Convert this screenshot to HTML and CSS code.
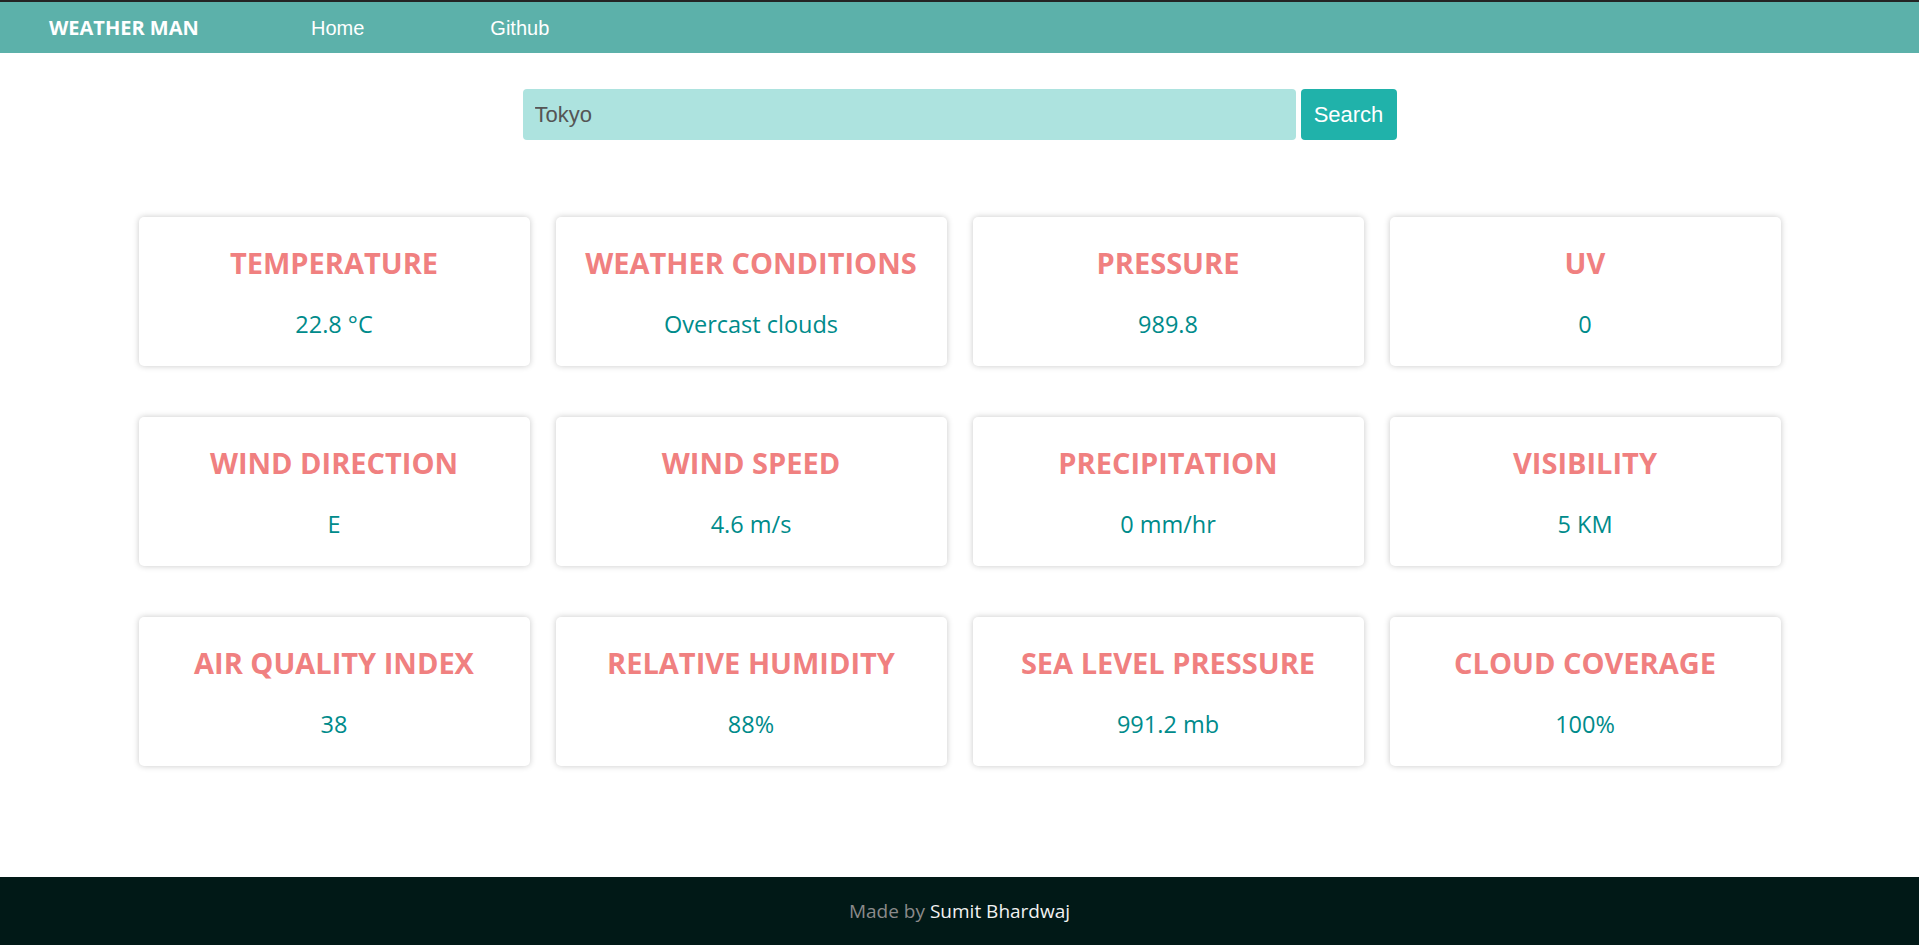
FILE: index.html
```html
<!DOCTYPE html>
<html lang="en">
<head>
<meta charset="utf-8">
<title>Weather Man</title>
<link rel="stylesheet" href="styles.css">
</head>
<body>
<nav class="navbar">
  <a class="brand" href="#">WEATHER MAN</a>
  <a class="nav-link" href="#">Home</a>
  <a class="nav-link" href="#">Github</a>
</nav>
<main class="main">
  <form class="search">
    <input class="search-input" type="text" value="Tokyo">
    <button class="search-btn" type="button">Search</button>
  </form>
  <section class="grid">
    <div class="card"><h2 class="card-title">TEMPERATURE</h2><p class="card-value">22.8 °C</p></div>
    <div class="card"><h2 class="card-title">WEATHER CONDITIONS</h2><p class="card-value">Overcast clouds</p></div>
    <div class="card"><h2 class="card-title">PRESSURE</h2><p class="card-value">989.8</p></div>
    <div class="card"><h2 class="card-title">UV</h2><p class="card-value">0</p></div>
    <div class="card"><h2 class="card-title">WIND DIRECTION</h2><p class="card-value">E</p></div>
    <div class="card"><h2 class="card-title">WIND SPEED</h2><p class="card-value">4.6 m/s</p></div>
    <div class="card"><h2 class="card-title">PRECIPITATION</h2><p class="card-value">0 mm/hr</p></div>
    <div class="card"><h2 class="card-title">VISIBILITY</h2><p class="card-value">5 KM</p></div>
    <div class="card"><h2 class="card-title">AIR QUALITY INDEX</h2><p class="card-value">38</p></div>
    <div class="card"><h2 class="card-title">RELATIVE HUMIDITY</h2><p class="card-value">88%</p></div>
    <div class="card"><h2 class="card-title">SEA LEVEL PRESSURE</h2><p class="card-value">991.2 mb</p></div>
    <div class="card"><h2 class="card-title">CLOUD COVERAGE</h2><p class="card-value">100%</p></div>
  </section>
</main>
<footer class="footer">
  <span class="footer-made">Made by</span> <span class="footer-name">Sumit Bhardwaj</span>
</footer>
</body>
</html>
```
FILE: styles.css
```css
html, body {
  margin: 0;
  padding: 0;
}
body {
  min-height: 100vh;
  display: flex;
  flex-direction: column;
  font-family: "Open Sans", "Noto Sans", sans-serif;
  background: #ffffff;
}
.navbar {
  display: flex;
  align-items: center;
  height: 51px;
  border-top: 2px solid #242424;
  background: #5cb1aa;
  padding-left: 49px;
}
.brand {
  flex: 0 0 262px;
  color: #ffffff;
  text-decoration: none;
  font-family: "Open Sans", sans-serif;
  font-weight: 700;
  font-size: 20px;
  line-height: 50px;
}
.nav-link {
  color: #ffffff;
  text-decoration: none;
  font-family: "Liberation Sans", Arial, sans-serif;
  font-size: 20px;
  line-height: 50px;
  margin-right: 126px;
}
.main {
  display: flex;
  flex-direction: column;
  align-items: center;
}
.search {
  display: flex;
  gap: 5px;
  margin-top: 36px;
}
.search-input {
  width: 773px;
  height: 51px;
  box-sizing: border-box;
  border: none;
  border-radius: 4px;
  background: #ade3df;
  padding: 0 12px;
  font-family: "Liberation Sans", Arial, sans-serif;
  font-size: 22px;
  color: #555555;
  outline: none;
}
.search-btn {
  width: 96px;
  height: 51px;
  border: none;
  border-radius: 4px;
  background: #20b2aa;
  color: #ffffff;
  font-family: "Liberation Sans", Arial, sans-serif;
  font-size: 22px;
  padding: 0;
  cursor: pointer;
}
.grid {
  display: grid;
  grid-template-columns: repeat(4, 391px);
  column-gap: 26px;
  row-gap: 51px;
  margin-top: 77px;
}
.card {
  height: 149px;
  box-sizing: border-box;
  padding-top: 29px;
  background: #ffffff;
  border-radius: 5px;
  box-shadow: 0 0 6px rgba(0, 0, 0, 0.22);
  text-align: center;
}
.card-title {
  margin: 0;
  font-size: 29px;
  font-weight: 700;
  line-height: 34px;
  color: #f08080;
}
.card-value {
  margin: 29px 0 0;
  font-size: 23.5px;
  line-height: 30px;
  color: #008b8b;
}
.footer {
  margin-top: auto;
  height: 68px;
  background: #011917;
  display: flex;
  align-items: center;
  justify-content: center;
  gap: 5px;
  font-size: 19px;
}
.footer-made {
  color: #8a8a8a;
}
.footer-name {
  color: #f2f2f2;
}
```
